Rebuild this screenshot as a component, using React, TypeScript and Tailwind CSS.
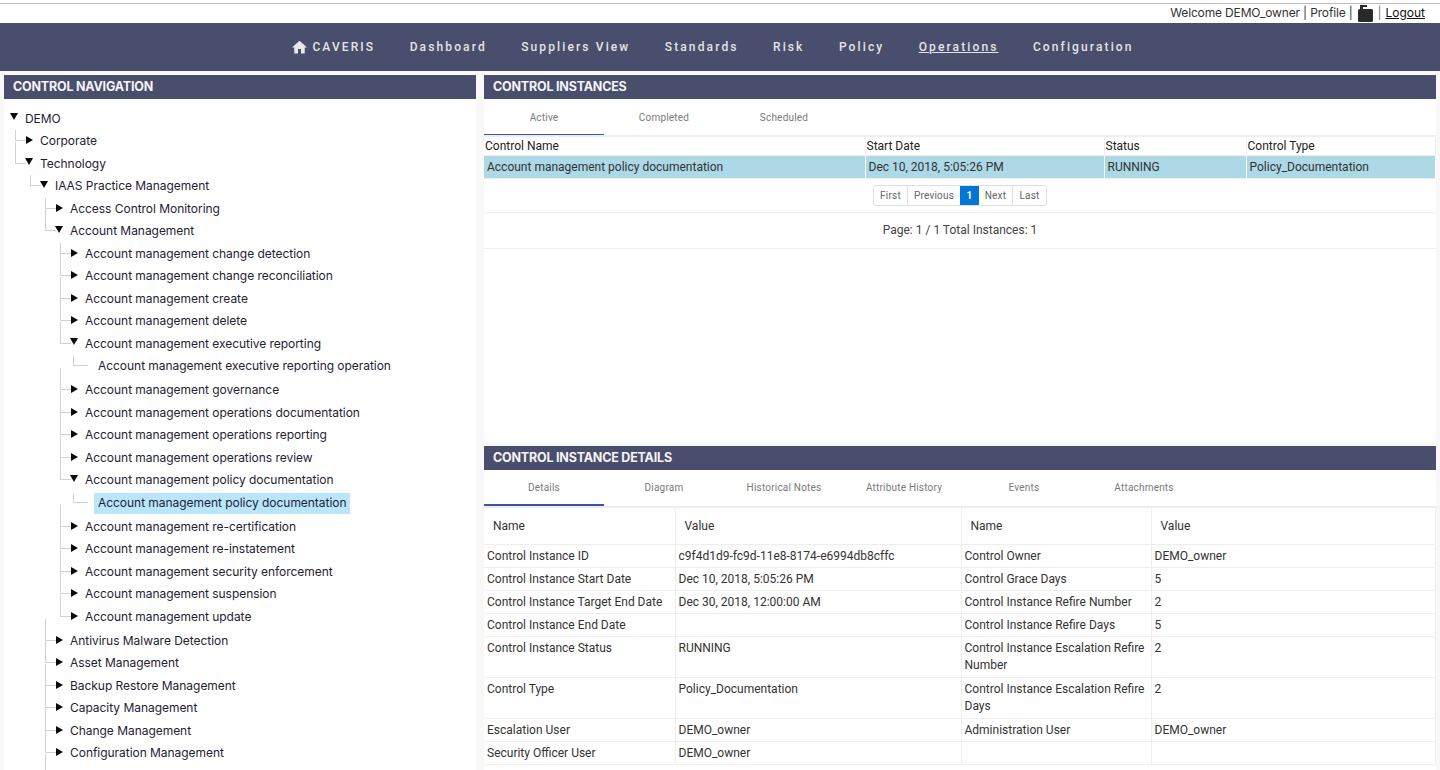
import React from "react";

type Row = { l: number; t: string; s?: "o" | "c" | "n"; first?: boolean; sel?: boolean; h?: number };

const ROWS: Row[] = [
  { l: 0, t: "DEMO", s: "o", h: 22.75 },
  { l: 1, t: "Corporate", s: "c", first: true },
  { l: 1, t: "Technology", s: "o" },
  { l: 2, t: "IAAS Practice Management", s: "o", first: true },
  { l: 3, t: "Access Control Monitoring", s: "c", first: true },
  { l: 3, t: "Account Management", s: "o" },
  { l: 4, t: "Account management change detection", s: "c", first: true },
  { l: 4, t: "Account management change reconciliation", s: "c" },
  { l: 4, t: "Account management create", s: "c" },
  { l: 4, t: "Account management delete", s: "c" },
  { l: 4, t: "Account management executive reporting", s: "o" },
  { l: 5, t: "Account management executive reporting operation", s: "n", first: true, h: 24 },
  { l: 4, t: "Account management governance", s: "c" },
  { l: 4, t: "Account management operations documentation", s: "c" },
  { l: 4, t: "Account management operations reporting", s: "c" },
  { l: 4, t: "Account management operations review", s: "c" },
  { l: 4, t: "Account management policy documentation", s: "o" },
  { l: 5, t: "Account management policy documentation", s: "n", first: true, sel: true, h: 24 },
  { l: 4, t: "Account management re-certification", s: "c" },
  { l: 4, t: "Account management re-instatement", s: "c" },
  { l: 4, t: "Account management security enforcement", s: "c" },
  { l: 4, t: "Account management suspension", s: "c" },
  { l: 4, t: "Account management update", s: "c", h: 24 },
  { l: 3, t: "Antivirus Malware Detection", s: "c" },
  { l: 3, t: "Asset Management", s: "c" },
  { l: 3, t: "Backup Restore Management", s: "c" },
  { l: 3, t: "Capacity Management", s: "c" },
  { l: 3, t: "Change Management", s: "c" },
  { l: 3, t: "Configuration Management", s: "c" },
  { l: 3, t: "" },
];

function TreeRow({ r }: { r: Row }) {
  const leaf = r.s === "n";
  const textLeft = leaf ? 94 : 21 + r.l * 15;
  const arrowLeft = 6.5 + r.l * 15;
  const lineLeft = leaf ? 69 : r.l * 15 - 4;
  return (
    <div className="relative" style={{ height: r.h ?? 22.5 }}>
      {r.l > 0 && (
        <span
          className="absolute -translate-y-full border-b border-l border-[#d2d2d2]"
          style={{
            left: lineLeft,
            width: leaf ? 15 : 11,
            height: r.first ? (leaf ? 10 : 11) : 22,
            top: 11,
          }}
        />
      )}
      {r.s === "c" && (
        <svg className="absolute top-[6px]" style={{ left: arrowLeft }} width="7" height="8" viewBox="0 0 7 8">
          <polygon points="0,0 7,4 0,8" fill="#0a0a0a" />
        </svg>
      )}
      {r.s === "o" && (
        <svg className="absolute top-[5.5px]" style={{ left: arrowLeft - 0.5 }} width="8" height="7" viewBox="0 0 8 7">
          <polygon points="0,0 8,0 4,7" fill="#0a0a0a" />
        </svg>
      )}
      {r.sel && <span className="absolute top-[1px] h-[21px] bg-[#b9e6fc]" style={{ left: 90, width: 256 }} />}
      <span
        className="absolute top-0 whitespace-nowrap leading-[22px] tracking-[-0.04px] text-[#1f2233]"
        style={{ left: textLeft }}
      >
        {r.t}
      </span>
    </div>
  );
}

function Header({ children }: { children: React.ReactNode }) {
  return (
    <div className="h-[24px] bg-[#484e6c] pl-[9px] text-[12.5px] font-bold leading-[24px] tracking-[-0.2px] text-[#f4f4f4]">
      {children}
    </div>
  );
}

function Tabs({ items, box, bar }: { items: string[]; box: string; bar: string }) {
  return (
    <div className={`flex h-[38px] border-b-2 border-[#eeeeee] ${box}`}>
      {items.map((t, i) => (
        <div
          key={t}
          className="relative flex w-[120px] items-center justify-center text-[10px] tracking-[0.2px] text-[#7a7a7a]"
        >
          {t}
          {i === 0 && <span className={`absolute inset-x-0 bg-[#3f51b5] ${bar}`} />}
        </div>
      ))}
    </div>
  );
}

const NAV = ["Dashboard", "Suppliers View", "Standards", "Risk", "Policy", "Operations", "Configuration"];

const DETAILS: [string, string, string, string, string][] = [
  ["Control Instance ID", "c9f4d1d9-fc9d-11e8-8174-e6994db8cffc", "Control Owner", "DEMO_owner", "h-[23px]"],
  ["Control Instance Start Date", "Dec 10, 2018, 5:05:26 PM", "Control Grace Days", "5", "h-[23px]"],
  ["Control Instance Target End Date", "Dec 30, 2018, 12:00:00 AM", "Control Instance Refire Number", "2", "h-[23px]"],
  ["Control Instance End Date", "", "Control Instance Refire Days", "5", "h-[23px]"],
  ["Control Instance Status", "RUNNING", "Control Instance Escalation Refire Number", "2", "h-[41px]"],
  ["Control Type", "Policy_Documentation", "Control Instance Escalation Refire Days", "2", "h-[41px]"],
  ["Escalation User", "DEMO_owner", "Administration User", "DEMO_owner", "h-[23px]"],
  ["Security Officer User", "DEMO_owner", "", "", "h-[23px]"],
];

export default function App() {
  return (
    <div className="flex h-[770px] flex-col overflow-hidden bg-[#f8f8f8] font-['Inter','Liberation_Sans',sans-serif] text-[12px] text-[#222]">
      <div className="h-[3px] bg-white" />
      <div className="flex h-[20px] items-center justify-end gap-[4px] border-t border-[#bdbdbd] bg-white pb-[1px] pr-[15px] text-[12px] tracking-[-0.15px] text-[#333]">
        <span>Welcome DEMO_owner | Profile |</span>
        <svg className="ml-[1px] mt-[1px]" width="15" height="17" viewBox="0 0 15 17">
          <path d="M2 0H9V2H5V4H13.5Q15 4 15 5.5V15.5Q15 17 13.5 17H1.5Q0 17 0 15.5V5.5Q0 4 2 4Z" fill="#2a2a2a" />
        </svg>
        <span className="ml-[1px] text-[#777]">|</span>
        <span className="tracking-normal text-[#111] underline">Logout</span>
      </div>
      <nav className="flex h-[48px] items-center justify-center gap-[34.4px] bg-[#484e6c] pr-[14px] font-['Roboto',sans-serif] text-[12px] font-medium tracking-[2.12px] text-[#e4e4e8]">
        <span className="flex items-center gap-[5px]">
          <svg width="15" height="14" viewBox="2 3 20 17" fill="#e8e8ec">
            <path d="M10 20v-6h4v6h5v-8h3L12 3 2 12h3v8z" />
          </svg>
          CAVERIS
        </span>
        {NAV.map((n) => (
          <span key={n} className={n === "Operations" ? "underline" : ""}>
            {n}
          </span>
        ))}
      </nav>

      <div className="flex min-h-0 flex-1 gap-[8px] px-[4px] pt-[4px]">
        <aside className="flex w-[472px] flex-col">
          <Header>CONTROL NAVIGATION</Header>
          <div className="flex-1 overflow-hidden bg-white pt-[8.5px]">
            {ROWS.map((r, i) => (
              <TreeRow key={i} r={r} />
            ))}
          </div>
        </aside>

        <main className="flex w-[952px] flex-col font-['Roboto',sans-serif]">
          <section className="flex h-[367px] flex-col bg-white">
            <div className="font-['Inter',sans-serif]">
              <Header>CONTROL INSTANCES</Header>
            </div>
            <Tabs items={["Active", "Completed", "Scheduled"]} box="" bar="bottom-0 h-[1px]" />
            <table className="w-full table-fixed border-collapse text-[12px]">
              <colgroup>
                <col className="w-[381px]" />
                <col className="w-[239px]" />
                <col className="w-[142px]" />
                <col />
              </colgroup>
              <thead>
                <tr className="h-[18px] border-b border-[#eeeeee] text-[#222]">
                  {["Control Name", "Start Date", "Status", "Control Type"].map((t) => (
                    <th key={t} className="border-r border-[#eeeeee] pl-[1px] text-left font-normal">
                      {t}
                    </th>
                  ))}
                </tr>
              </thead>
              <tbody>
                <tr className="h-[23px] border-b border-[#eeeeee] bg-[#add8e6] text-[#333]">
                  {["Account management policy documentation", "Dec 10, 2018, 5:05:26 PM", "RUNNING", "Policy_Documentation"].map(
                    (t) => (
                      <td key={t} className="border-r border-white pl-[3px]">
                        {t}
                      </td>
                    ),
                  )}
                </tr>
              </tbody>
            </table>
            <div className="flex h-[34px] items-center justify-center border-b border-[#eeeeee] text-[10px] tracking-[0.2px] text-[#666]">
              <div className="flex h-[21px] overflow-hidden rounded-[3px] border border-[#e0e0e0] bg-white">
                <span className="flex w-[34px] items-center justify-center border-r border-[#e0e0e0]">First</span>
                <span className="flex w-[52px] items-center justify-center">Previous</span>
                <span className="flex w-[19px] items-center justify-center bg-[#0275d8] font-bold text-white">1</span>
                <span className="flex w-[34px] items-center justify-center border-r border-[#e0e0e0]">Next</span>
                <span className="flex w-[33px] items-center justify-center">Last</span>
              </div>
            </div>
            <div className="flex h-[36px] items-center justify-center border-b border-[#eeeeee] pb-[1px] text-[12px] text-[#444]">
              Page: 1 / 1 Total Instances: 1
            </div>
          </section>
          <div className="h-[4px]" />
          <section className="flex flex-1 flex-col bg-white">
            <div className="font-['Inter',sans-serif]">
              <Header>CONTROL INSTANCE DETAILS</Header>
            </div>
            <Tabs
              items={["Details", "Diagram", "Historical Notes", "Attribute History", "Events", "Attachments"]}
              box="pb-[2px]"
              bar="bottom-[-2px] h-[2px]"
            />
            <table className="w-full table-fixed border-collapse text-[12px] text-[#333]">
              <colgroup>
                <col className="w-[191px]" />
                <col className="w-[286px]" />
                <col className="w-[190px]" />
                <col />
              </colgroup>
              <thead>
                <tr className="h-[36px] border-b border-[#eeeeee]">
                  {["Name", "Value", "Name", "Value"].map((t, i) => (
                    <th key={i} className="border-r border-[#eeeeee] pl-[9px] text-left font-normal">
                      {t}
                    </th>
                  ))}
                </tr>
              </thead>
              <tbody>
                {DETAILS.map((d) => (
                  <tr key={d[0]} className={`${d[4]} border-b border-[#eeeeee]`}>
                    {d.slice(0, 4).map((c, i) => (
                      <td key={i} className="border-r border-[#eeeeee] pl-[3px] pr-[2px] pt-[3px] align-top leading-[17px]">
                        {c}
                      </td>
                    ))}
                  </tr>
                ))}
              </tbody>
            </table>
          </section>
        </main>
      </div>
    </div>
  );
}
